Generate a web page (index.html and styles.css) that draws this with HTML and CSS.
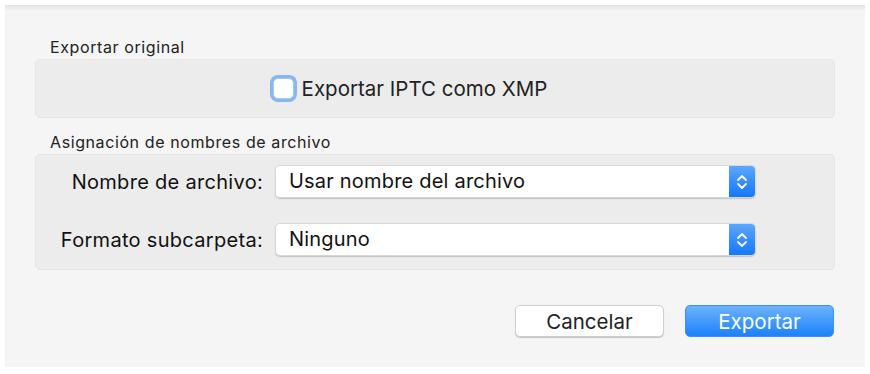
FILE: index.html
```html
<!DOCTYPE html>
<html>

<head>
  <title>Exportar</title>
  <link rel="stylesheet" href="styles.css">
</head>

<body>
  <div class="sheet">
    <div class="group-title">Exportar original</div>
    <div class="group group-original">
      <label class="check">
        <span class="check-box"></span>
        <span class="check-text">Exportar IPTC como XMP</span>
      </label>
    </div>

    <div class="group-title">Asignación de nombres de archivo</div>
    <div class="group group-names">
      <div class="row">
        <div class="row-label">Nombre de archivo:</div>
        <div class="select">
          <span class="select-value">Usar nombre del archivo</span>
          <span class="stepper">
            <svg width="12" height="18" viewBox="0 0 12 18">
              <path d="M2 7 L6 3 L10 7 M2 11 L6 15 L10 11" fill="none" stroke="#fff" stroke-width="1.8" stroke-linecap="round" stroke-linejoin="round" />
            </svg>
          </span>
        </div>
      </div>
      <div class="row">
        <div class="row-label">Formato subcarpeta:</div>
        <div class="select">
          <span class="select-value">Ninguno</span>
          <span class="stepper">
            <svg width="12" height="18" viewBox="0 0 12 18">
              <path d="M2 7 L6 3 L10 7 M2 11 L6 15 L10 11" fill="none" stroke="#fff" stroke-width="1.8" stroke-linecap="round" stroke-linejoin="round" />
            </svg>
          </span>
        </div>
      </div>
    </div>

    <div class="buttons">
      <button class="btn btn-cancel">Cancelar</button>
      <button class="btn btn-primary">Exportar</button>
    </div>
  </div>
</body>

</html>
```

FILE: styles.css
```css
body {
  margin: 0;
  background: #ffffff;
  font-family: Inter, "Liberation Sans", sans-serif;
  color: #222;
}

.sheet {
  box-sizing: border-box;
  margin: 5px;
  width: 860px;
  height: 362px;
  padding: 30px 30px 0 30px;
  background: #f5f5f5;
  background-image: linear-gradient(#e2e2e2, #f5f5f5 6px);
}

.group-title {
  font-size: 16px;
  letter-spacing: 0.6px;
  line-height: 24px;
  padding-left: 15px;
  color: #222;
}

.group {
  background: #ececec;
  border: 1px solid #e6e6e6;
  border-radius: 5px;
}

.group-original {
  height: 57px;
  display: flex;
  align-items: center;
  justify-content: center;
  margin-bottom: 12px;
}

.check {
  display: flex;
  align-items: center;
  gap: 8px;
  margin-right: 50px;
}

.check-box {
  width: 19px;
  height: 19px;
  background: #fff;
  border-radius: 5px;
  border: 1px solid #a9c8f0;
  box-shadow: 0 0 0 3px #86b7f5;
}

.check-text {
  font-size: 20.5px;
  color: #222;
}

.group-names {
  height: 116px;
  display: flex;
  flex-direction: column;
  padding-top: 11px;
  gap: 27px;
  box-sizing: border-box;
}

.row {
  display: flex;
  align-items: center;
}

.row-label {
  width: 227px;
  text-align: right;
  font-size: 20px;
  letter-spacing: 0.3px;
  color: #111;
  margin-right: 13px;
}

.select {
  width: 479px;
  height: 31px;
  display: flex;
  background: #fff;
  border-radius: 4px;
  box-shadow: 0 0 0 1px #d8d8d8, 0 1px 1px 1px #c4c4c4;
  overflow: hidden;
}

.select-value {
  flex: 1;
  font-size: 20px;
  letter-spacing: 0.2px;
  line-height: 31px;
  padding-left: 13px;
  color: #111;
}

.stepper {
  width: 26px;
  display: flex;
  align-items: center;
  justify-content: center;
  background: linear-gradient(#5ba7fd, #1478fb);
}

.buttons {
  display: flex;
  justify-content: flex-end;
  gap: 21px;
  margin-top: 35px;
  padding-right: 1px;
}

.btn {
  font-family: Inter, "Liberation Sans", sans-serif;
  font-size: 20.5px;
  width: 149px;
  height: 32px;
  border-radius: 5px;
  padding: 0;
}

.btn-cancel {
  background: #fff;
  border: 1px solid #cfcfcf;
  box-shadow: 0 1px 1px #c4c4c4;
  color: #222;
}

.btn-primary {
  background: linear-gradient(#6cb3fa, #1a82fb);
  border: 1px solid #3d8ef5;
  color: #fff;
}
```
